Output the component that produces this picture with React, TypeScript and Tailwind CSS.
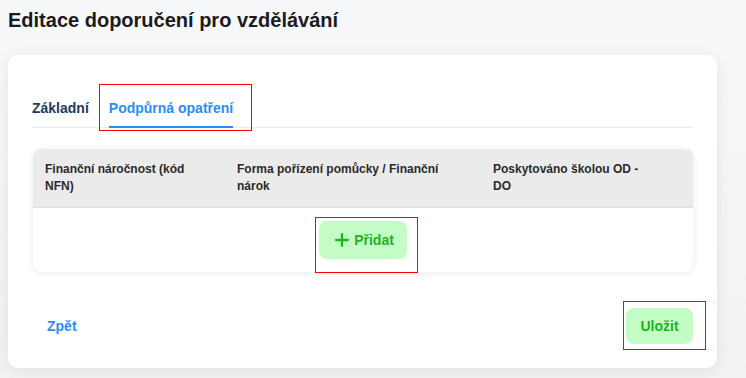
import { Plus } from "lucide-react";

const Mark = ({ className }: { className: string }) => (
  <span className={`pointer-events-none absolute border border-solid border-[#ff0000] ${className}`} />
);

const columns = [
  { label: "Finanční náročnost (kód NFN)", width: "w-[160px]" },
  { label: "Forma pořízení pomůcky / Finanční nárok", width: "w-[222px]" },
  { label: "Poskytováno školou OD - DO", width: "w-[152px]" },
];

const App = () => {
  return (
    <div
      className="h-[378px] w-[746px] overflow-hidden bg-gradient-to-b from-[#f7f8fa] to-[#f1f2f4]"
      style={{ fontFamily: '"Liberation Sans", Arial, sans-serif' }}
    >
      <h1 className="px-2 pt-2 text-[20px] font-bold leading-6 text-[#1b1b1b]">
        Editace doporučení pro vzdělávání
      </h1>

      <div className="ml-2 mt-[23px] h-[313px] w-[709px] rounded-[10px] bg-white px-6 pt-[45px] shadow-[0_2px_14px_rgba(0,0,0,0.08)]">
        {/* tabs */}
        <div className="flex gap-5 border-b border-[#e6eefa]">
          <button className="-mb-px border-b-2 border-transparent pb-[10px] text-[14px] font-bold leading-4 text-[#1f3a5c]">
            Základní
          </button>
          <button className="relative -mb-px border-b-2 border-[#2b8cf5] pb-[10px] text-[14px] font-bold leading-4 text-[#2b8cf5]">
            Podpůrná opatření
            <Mark className="-bottom-[5px] -left-[10px] -right-[19px] -top-[16px]" />
          </button>
        </div>

        {/* table */}
        <div className="ml-px mt-[21px] w-[660px] rounded-[8px] bg-white shadow-[0_1px_6px_rgba(0,0,0,0.09)]">
          <div className="grid grid-cols-[192px_256px_1fr] rounded-t-[8px] border-b border-[#dde1e4] bg-[#ebebeb]">
            {columns.map((c) => (
              <div key={c.label} className="px-3 py-3">
                <div className={`${c.width} text-[12px] font-bold leading-[17px] text-[#2a2a2a]`}>
                  {c.label}
                </div>
              </div>
            ))}
          </div>
          <div className="flex h-[64px] items-center justify-center">
            <button className="relative flex h-[38px] w-[88px] items-center justify-center gap-[2px] rounded-[8px] bg-[#c4fcc6] text-[14px] font-bold text-[#1eb31e]">
              <Plus className="h-[20px] w-[20px]" strokeWidth={2.75} />
              Přidat
              <Mark className="-bottom-[14px] -left-[4px] -right-[11px] -top-[4px]" />
            </button>
          </div>
        </div>

        {/* footer */}
        <div className="mt-[36px] flex items-center justify-between">
          <button className="px-[15px] text-[14px] font-bold leading-4 text-[#2b8cf5]">Zpět</button>
          <button className="relative h-[36px] w-[67px] rounded-[8px] bg-[#c4fcc6] text-[14px] font-bold text-[#1eb31e]">
            Uložit
            <Mark className="-bottom-[6px] -left-[3px] -right-[13px] -top-[7px]" />
          </button>
        </div>
      </div>
    </div>
  );
};

export default App;
